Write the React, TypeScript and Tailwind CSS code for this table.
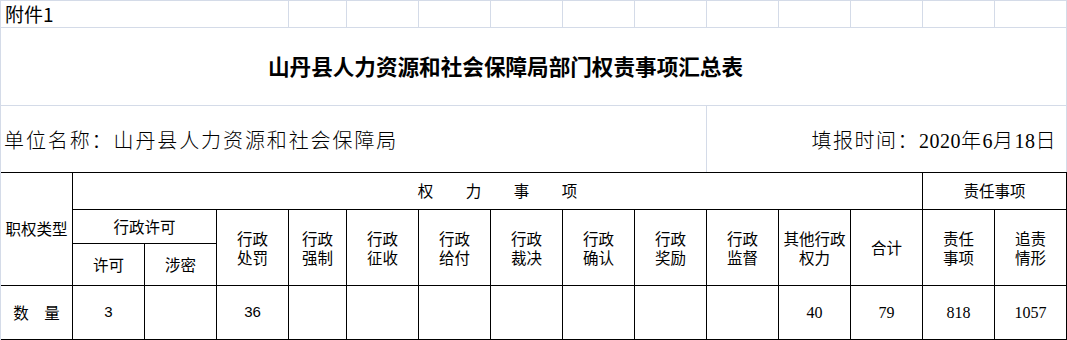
import React from "react";

const CJK = "font-['Noto_Sans_CJK_SC',sans-serif]";
const cell = "flex items-center justify-center border-r border-b border-black text-center";

interface HeadProps {
  top: string;
  bottom: string;
}

const TwoLine: React.FC<HeadProps> = ({ top, bottom }) => (
  <div className={`${cell} row-span-2 flex-col leading-[19px]`}>
    <span>{top}</span>
    <span>{bottom}</span>
  </div>
);

const powerHeads: [string, string][] = [
  ["行政", "处罚"],
  ["行政", "强制"],
  ["行政", "征收"],
  ["行政", "给付"],
  ["行政", "裁决"],
  ["行政", "确认"],
  ["行政", "奖励"],
  ["行政", "监督"],
  ["其他行政", "权力"],
];

// values for the 数量 row, after the first column
const counts = [
  { v: "3", sans: true },
  { v: "" },
  { v: "36", sans: true },
  { v: "" },
  { v: "" },
  { v: "" },
  { v: "" },
  { v: "" },
  { v: "" },
  { v: "" },
  { v: "40" },
  { v: "79" },
  { v: "818" },
  { v: "1057" },
];

const topCols = [58, 72, 72, 72, 72, 72, 72, 72, 72, 72, 72];

export default function App() {
  return (
    <div className={`w-[1067px] h-[340px] overflow-hidden bg-white text-black border-l border-t border-[#d4dbe8] ${CJK}`}>
      {/* row 1 */}
      <div className="flex h-[27px] border-b border-[#d4dbe8]">
        <div className="w-[288px] shrink-0 border-r border-[#d4dbe8] flex items-end pl-[4px] pb-[1px] text-[19px] leading-[24px]">
          附件1
        </div>
        {topCols.map((w, i) => (
          <div
            key={i}
            className={`shrink-0 border-r border-[#d4dbe8] ${w === 58 ? "w-[58px]" : "w-[72px]"}`}
          />
        ))}
      </div>

      {/* title */}
      <div className="flex h-[78px] w-[1066px] items-center justify-center pr-[56px] border-b border-r border-[#d4dbe8] text-[21.6px] font-bold">
        山丹县人力资源和社会保障局部门权责事项汇总表
      </div>

      {/* unit / date */}
      <div className="flex h-[67px] border-b border-black font-['Liberation_Serif','Noto_Sans_CJK_SC',serif] font-light text-[20px]">
        <div className="w-[706px] shrink-0 border-r border-[#d4dbe8] flex items-center pl-[3px] pt-[3px] tracking-[1.9px]">
          单位名称：山丹县人力资源和社会保障局
        </div>
        <div className="w-[360px] shrink-0 border-r border-[#d4dbe8] flex items-center justify-end pr-[9px] pt-[3px] tracking-[1.5px]">
          填报时间：<span className="tracking-[0.5px]">2020</span>年<span className="tracking-[0.5px]">6</span>月<span className="tracking-[0.5px]">18</span>日
        </div>
      </div>

      {/* table */}
      <div className="grid grid-cols-[72px_72px_72px_72px_58px_repeat(10,72px)] grid-rows-[37px_34px_42px_54px] text-[15.5px]">
        <div className={`${cell} row-span-3`}>职权类型</div>
        <div className={`${cell} col-span-12 gap-[32.5px]`}>
          <span>权</span>
          <span>力</span>
          <span>事</span>
          <span>项</span>
        </div>
        <div className={`${cell} col-span-2`}>责任事项</div>

        <div className={`${cell} col-span-2`}>行政许可</div>
        {powerHeads.map(([a, b], i) => (
          <TwoLine key={i} top={a} bottom={b} />
        ))}
        <div className={`${cell} row-span-2`}>合计</div>
        <TwoLine top="责任" bottom="事项" />
        <TwoLine top="追责" bottom="情形" />

        <div className={cell}>许可</div>
        <div className={cell}>涉密</div>

        <div className={`${cell} whitespace-pre`}>数　量</div>
        {counts.map((c, i) => (
          <div
            key={i}
            className={`${cell} ${
              c.sans
                ? "font-['Liberation_Sans',sans-serif] text-[15px]"
                : "font-['Liberation_Serif',serif] text-[16px]"
            }`}
          >
            {c.v}
          </div>
        ))}
      </div>
    </div>
  );
}
